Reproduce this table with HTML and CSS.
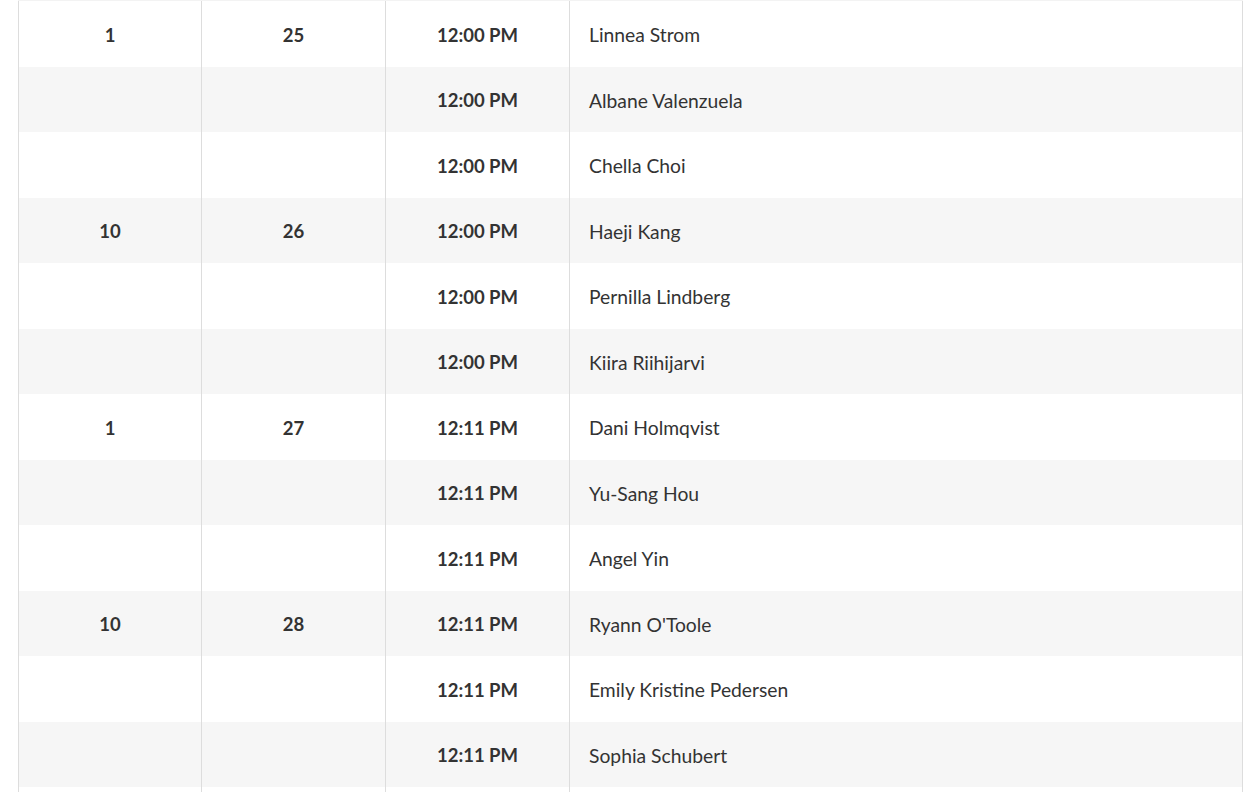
FILE: index.html
```html
<!DOCTYPE html>
<html lang="en">
<head>
<meta charset="utf-8">
<title>Schedule</title>
<link rel="stylesheet" href="styles.css">
</head>
<body>
<div class="schedule">
  <div class="row"><div class="cell num">1</div><div class="cell num">25</div><div class="cell num">12:00 PM</div><div class="cell name">Linnea Strom</div></div>
  <div class="row alt"><div class="cell num"></div><div class="cell num"></div><div class="cell num">12:00 PM</div><div class="cell name">Albane Valenzuela</div></div>
  <div class="row"><div class="cell num"></div><div class="cell num"></div><div class="cell num">12:00 PM</div><div class="cell name">Chella Choi</div></div>
  <div class="row alt"><div class="cell num">10</div><div class="cell num">26</div><div class="cell num">12:00 PM</div><div class="cell name">Haeji Kang</div></div>
  <div class="row"><div class="cell num"></div><div class="cell num"></div><div class="cell num">12:00 PM</div><div class="cell name">Pernilla Lindberg</div></div>
  <div class="row alt"><div class="cell num"></div><div class="cell num"></div><div class="cell num">12:00 PM</div><div class="cell name">Kiira Riihijarvi</div></div>
  <div class="row"><div class="cell num">1</div><div class="cell num">27</div><div class="cell num">12:11 PM</div><div class="cell name">Dani Holmqvist</div></div>
  <div class="row alt"><div class="cell num"></div><div class="cell num"></div><div class="cell num">12:11 PM</div><div class="cell name">Yu-Sang Hou</div></div>
  <div class="row"><div class="cell num"></div><div class="cell num"></div><div class="cell num">12:11 PM</div><div class="cell name">Angel Yin</div></div>
  <div class="row alt"><div class="cell num">10</div><div class="cell num">28</div><div class="cell num">12:11 PM</div><div class="cell name">Ryann O'Toole</div></div>
  <div class="row"><div class="cell num"></div><div class="cell num"></div><div class="cell num">12:11 PM</div><div class="cell name">Emily Kristine Pedersen</div></div>
  <div class="row alt"><div class="cell num"></div><div class="cell num"></div><div class="cell num">12:11 PM</div><div class="cell name">Sophia Schubert</div></div>
  <div class="row"><div class="cell num"></div><div class="cell num"></div><div class="cell num"></div><div class="cell name"></div></div>
</div>
</body>
</html>
```
FILE: styles.css
```css
html, body {
  margin: 0;
  padding: 0;
  background: #ffffff;
  overflow: hidden;
}

body {
  font-family: Lato, "Liberation Sans", sans-serif;
  color: #333333;
  font-size: 18px;
}

.schedule {
  margin-left: 18px;
  width: 1225px;
  border-top: 1px solid #f3f3f3;
}

.row {
  display: grid;
  grid-template-columns: 183px 184px 184px 1fr;
  height: 65.5px;
  background: #ffffff;
}

.row.alt {
  background: #f6f6f6;
}

.cell {
  border-left: 1px solid #dddddd;
  display: flex;
  align-items: center;
  box-sizing: border-box;
  padding-top: 2px;
}

.cell.num {
  justify-content: center;
  font-weight: 700;
  font-size: 18.5px;
}

.cell.name {
  padding-left: 19px;
  font-size: 19.3px;
  border-right: 1px solid #dddddd;
}
```
